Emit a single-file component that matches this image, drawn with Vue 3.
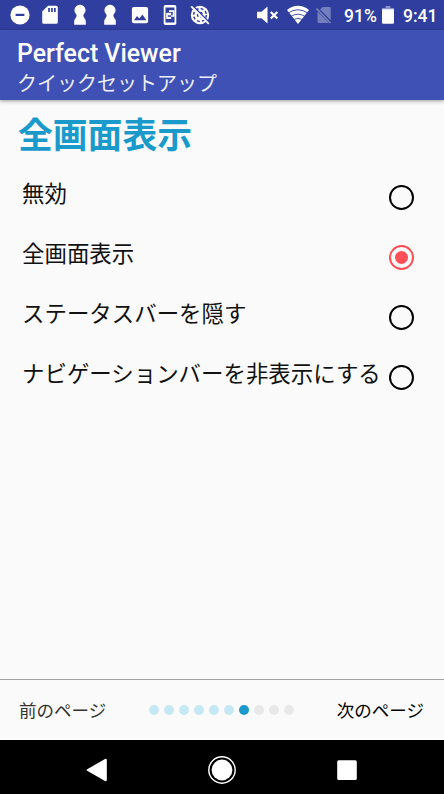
<script setup>
import { ref } from 'vue'

const options = ['無効', '全画面表示', 'ステータスバーを隠す', 'ナビゲーションバーを非表示にする']
const selected = ref(1)
const pageCount = 10
const currentPage = 7
</script>

<template>
  <div class="screen">
    <div class="status">
      <div class="notifications">
        <svg viewBox="0 0 30 30"><circle cx="15" cy="15" r="9.6" fill="#fff" /><rect x="10.6" y="13.8" width="8.8" height="2.2" fill="#303f9f" /></svg>
        <svg viewBox="0 0 30 30"><path d="M13 5.8h8.2a1.6 1.6 0 0 1 1.6 1.6v14.8a1.6 1.6 0 0 1-1.6 1.6H8.8a1.6 1.6 0 0 1-1.6-1.6V11.6z" fill="#fff" /><path d="M13.2 8h1.7v4h-1.7zM16.1 8h1.7v4h-1.7zM19 8h1.7v4H19z" fill="#303f9f" /></svg>
        <svg v-for="n in 2" :key="n" viewBox="0 0 30 30"><path d="M15 4.7a5.6 5.6 0 0 0-4 9.400q.9 1 .6 2.200L9.200 20.600V24.800H20.800V20.600L18.400 16.300q-.3-1.200.6-2.200A5.600 5.600 0 0 0 15 4.700z" fill="#fff" /></svg>
        <svg viewBox="0 0 30 30"><rect x="6.9" y="7" width="16.2" height="16.2" rx="2" fill="#fff" /><path d="M9 20.3l3-4.3 2.300 2.600 3.100-4.100 4 5.800z" fill="#303f9f" /></svg>
        <svg viewBox="0 0 30 30">
          <rect x="8.7" y="5" width="12.6" height="20" rx="1.8" fill="#fff" />
          <rect x="10.500" y="7.500" width="9" height="15" fill="#303f9f" />
          <path d="M14 10.200h5.500v6.500H16v-1.500h1.800v-3.300H14z" fill="#fff" />
          <path d="M11.200 12.800h5v6.200h-5z" fill="#fff" />
          <path d="M12.800 15.300h3.400v1.500h-3.400z" fill="#303f9f" />
        </svg>
        <svg viewBox="0 0 30 30">
          <circle cx="15" cy="15" r="9.200" fill="#fff" />
          <g fill="none" stroke="#303f9f" stroke-width="1.500" stroke-dasharray="2.900 2.100"><circle cx="15" cy="15" r="6.400" /><circle cx="15" cy="15" r="2.400" /></g>
          <path d="M7.700 5.700l17 17" stroke="#303f9f" stroke-width="1.600" />
          <path d="M6.200 6.300l17.600 17.600" stroke="#fff" stroke-width="1.900" />
        </svg>
      </div>
      <div class="system">
        <svg class="mute" viewBox="0 0 22 20"><path d="M0 6.800h4.600L10.500 1.500v17L4.600 13.200H0z" fill="#fff" /><path d="M13.800 7l6.500 6.500M20.300 7l-6.500 6.500" stroke="#fff" stroke-width="2.300" /></svg>
        <svg class="wifi" viewBox="0 0 22 20"><path d="M0 5q11-8.300 22 0L11 19z" fill="#fff" /><path d="M1 8.100q10-6.700 20 0M3.800 11.500q7.200-4.600 14.400 0M6.800 14.500q4.200-2.500 8.400 0" fill="none" stroke="#303f9f" stroke-width=".9" /></svg>
        <svg class="sim" viewBox="0 0 16 18"><path d="M6.500 1h7a1.200 1.200 0 0 1 1.200 1.200v12.300L4 3.500zM1.500 5.500L13 17H3a1.500 1.500 0 0 1-1.500-1.500z" fill="#7480bd" /><path d="M1.300 1.500l14 14.500" stroke="#303f9f" stroke-width="1.200" /><path d="M.5 2.500l14 14.500" stroke="#7480bd" stroke-width="1.700" /></svg>
        <span class="percent">91%</span>
        <svg class="battery" viewBox="0 0 12 18"><path d="M3.600 0h4.800v2H12v3H0V2h3.600z" fill="#8992c8" /><path d="M0 3.300h12v13.200a1.200 1.200 0 0 1-1.200 1.200H1.200A1.200 1.200 0 0 1 0 16.500z" fill="#fff" /></svg>
        <span class="clock">9:41</span>
      </div>
    </div>

    <header class="appbar">
      <div class="title">Perfect Viewer</div>
      <div class="subtitle">クイックセットアップ</div>
    </header>

    <main class="content">
      <h1>全画面表示</h1>
      <div v-for="(label, i) in options" :key="label" class="option" role="radio" :aria-checked="selected === i" @click="selected = i">
        <span class="label">{{ label }}</span>
        <span class="radio" :class="{ checked: selected === i }"></span>
      </div>
    </main>

    <footer class="pager">
      <span class="prev">前のページ</span>
      <div class="dots">
        <i v-for="n in pageCount" :key="n" :class="{ done: n < currentPage, current: n === currentPage }"></i>
      </div>
      <span class="next">次のページ</span>
    </footer>

    <nav class="navbar">
      <svg viewBox="0 0 26 26"><path d="M3.200 12.200L21 2q1.800-.6 1.800 1v20q0 1.600-1.800 1L3.200 13.800q-1.200-.8 0-1.600z" fill="#fff" /></svg>
      <svg class="home" viewBox="0 0 30 30"><circle cx="15" cy="15" r="13.200" fill="none" stroke="#fff" stroke-width="1.400" /><circle cx="15" cy="15" r="10.400" fill="#fff" /></svg>
      <svg viewBox="0 0 26 26"><rect x="3.200" y="3.300" width="19.600" height="19.600" rx="1.500" fill="#fff" /></svg>
    </nav>
  </div>
</template>

<style>
body {
  margin: 0;
  background: #fafafa;
}
</style>

<style scoped>
.screen {
  display: flex;
  flex-direction: column;
  width: 444px;
  height: 794px;
  overflow: hidden;
  background: #fafafa;
  color: #111;
  font-family: Roboto, 'Noto Sans CJK JP', sans-serif;
  white-space: nowrap;
}
svg {
  display: block;
  flex: none;
}
.status {
  display: flex;
  justify-content: space-between;
  height: 30px;
  background: #303f9f;
  color: #fff;
}
.notifications {
  display: flex;
  padding-left: 4.5px;
}
.notifications svg {
  width: 30px;
  height: 30px;
}
.system {
  display: flex;
  align-items: center;
  padding-right: 7px;
  font-size: 17.5px;
  font-weight: 500;
  line-height: 30px;
}
.mute {
  width: 22px;
  height: 20px;
  margin-right: 8px;
}
.wifi {
  width: 22px;
  height: 20px;
  margin-right: 7px;
}
.sim {
  width: 16px;
  height: 18px;
  margin-right: 12px;
}
.percent {
  width: 38px;
  padding-top: 2px;
}
.battery {
  width: 12px;
  height: 18px;
  margin-right: 9px;
}
.clock {
  width: 34px;
  padding-top: 2px;
}
.appbar {
  z-index: 1;
  box-sizing: border-box;
  height: 70px;
  padding: 8px 17px 0;
  background: #3f51b5;
  box-shadow: 0 1px 4px rgba(0, 0, 0, 0.4);
  color: #fff;
}
.title {
  font-size: 24.9px;
  font-weight: 500;
  line-height: 32px;
}
.subtitle {
  color: #eceefa;
  font-size: 20px;
  line-height: 28px;
}
.content {
  flex: 1;
  min-height: 0;
}
h1 {
  height: 64px;
  margin: 0;
  padding-left: 18px;
  color: #1a9acb;
  font-size: 34.8px;
  font-weight: 700;
  line-height: 72px;
}
.option {
  display: flex;
  align-items: center;
  justify-content: space-between;
  height: 60px;
  padding: 0 30px 0 22px;
}
.label {
  padding-bottom: 1px;
  font-size: 22.45px;
  line-height: 58px;
}
.radio {
  display: grid;
  flex: none;
  place-items: center;
  box-sizing: border-box;
  width: 25px;
  height: 25px;
  margin-top: 7px;
  border: 2px solid #000;
  border-radius: 50%;
}
.radio.checked {
  border-color: #ff4b52;
}
.radio.checked::after {
  width: 13px;
  height: 13px;
  border-radius: 50%;
  background: #ff5058;
  content: '';
}
.pager {
  display: flex;
  align-items: center;
  justify-content: space-between;
  box-sizing: border-box;
  height: 61px;
  padding: 0 20px 0 19px;
  border-top: 1px solid #a3a3a3;
  font-size: 17.5px;
}
.prev,
.next {
  padding-bottom: 2px;
}
.prev {
  color: #333;
}
.next {
  color: #000;
}
.dots {
  display: flex;
  gap: 5px;
}
.dots i {
  width: 10px;
  height: 10px;
  border-radius: 50%;
  background: #e8e8e8;
}
.dots .done {
  background: #c5e8f5;
}
.dots .current {
  background: #1a9acb;
}
.navbar {
  display: flex;
  align-items: center;
  justify-content: space-between;
  box-sizing: border-box;
  height: 54px;
  padding: 5px 84px 0;
  background: #000;
}
.navbar svg {
  width: 26px;
  height: 26px;
}
.navbar .home {
  width: 30px;
  height: 30px;
}
</style>
